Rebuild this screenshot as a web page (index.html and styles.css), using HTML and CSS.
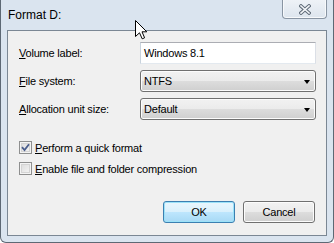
FILE: index.html
```html
<!DOCTYPE html>
<html>
<head>
<meta charset="utf-8">
<link rel="stylesheet" href="styles.css">
</head>
<body>
<div class="window">
  <div class="titlebar">
    <span class="title">Format D:</span>
    <div class="close">
      <svg width="12" height="11" viewBox="0 0 12 11">
        <path d="M2 2 L10 9 M10 2 L2 9" stroke="#5f6b78" stroke-width="3.6" stroke-linecap="square" fill="none"/>
        <path d="M2 2 L10 9 M10 2 L2 9" stroke="#f4f6f9" stroke-width="1.6" stroke-linecap="square" fill="none"/>
      </svg>
    </div>
  </div>
  <div class="client">
    <div class="fields">
      <span class="lbl"><u>V</u>olume label:</span>
      <div class="textbox">Windows 8.1</div>
      <span class="lbl"><u>F</u>ile system:</span>
      <div class="combo"><span>NTFS</span><i class="arrow"></i></div>
      <span class="lbl"><u>A</u>llocation unit size:</span>
      <div class="combo"><span>Default</span><i class="arrow"></i></div>
    </div>
    <div class="checks">
      <div class="check">
        <span class="box">
          <svg width="9" height="9" viewBox="0 0 9 9"><path d="M1 4.2 L3.5 7 L8 1.2" stroke="#4a5d8c" stroke-width="1.8" fill="none"/></svg>
        </span>
        <span class="ctext"><u>P</u>erform a quick format</span>
      </div>
      <div class="check">
        <span class="box"></span>
        <span class="ctext"><u>E</u>nable file and folder compression</span>
      </div>
    </div>
    <div class="buttons">
      <div class="btn default">OK</div>
      <div class="btn">Cancel</div>
    </div>
  </div>
</div>
<svg class="cursor" width="13" height="20" viewBox="0 0 13 20">
  <path d="M0.5 0.5 L0.5 16.5 L4.5 12.8 L7.2 18.8 L9.6 17.8 L7 11.8 L11.8 11.8 Z" fill="#fff" stroke="#000" stroke-width="1" stroke-linejoin="miter"/>
</svg>
</body>
</html>
```
FILE: styles.css
```css
html, body {
  margin: 0;
  padding: 0;
  background: #ffffff;
}
body {
  width: 334px;
  height: 243px;
  position: relative;
  overflow: hidden;
  font-family: "Liberation Sans", Arial, sans-serif;
  font-size: 11px;
  color: #000;
}
.window {
  box-sizing: border-box;
  width: 334px;
  height: 243px;
  background: #dae4ef;
  border: 1px solid #5d6874;
  border-top: none;
  border-radius: 0 0 6px 6px;
  padding: 0 6px 6px 6px;
  display: flex;
  flex-direction: column;
}
.titlebar {
  height: 30px;
  display: flex;
  justify-content: space-between;
  align-items: flex-start;
  flex: none;
}
.title {
  font-size: 12px;
  margin-top: 8px;
  margin-left: 1px;
  color: #000;
}
.close {
  box-sizing: border-box;
  width: 45px;
  height: 19px;
  border: 1px solid #8995a3;
  border-top: none;
  border-radius: 0 0 4px 4px;
  background: linear-gradient(#eef2f7, #dde5ee);
  box-shadow: inset 0 -1px 0 #f7f9fb, inset 1px 0 0 #f7f9fb, inset -1px 0 0 #f7f9fb;
  display: flex;
  align-items: center;
  justify-content: center;
  padding-left: 1px;
}
.close svg { display: block; }
.client {
  flex: 1;
  border: 1px solid #7b8794;
  background: #f0f0f0;
  display: flex;
  flex-direction: column;
  padding: 11px 0 12px 11px;
}
.fields {
  display: grid;
  grid-template-columns: 121px 176px;
  grid-auto-rows: 22px;
  row-gap: 6px;
  align-items: center;
  letter-spacing: -0.2px;
}
.lbl {
  white-space: nowrap;
}
.textbox {
  box-sizing: border-box;
  height: 22px;
  background: #fff;
  border: 1px solid;
  border-color: #abadb3 #dbdfe6 #e3e9ef #c9d3dd;
  padding: 0 3px;
  line-height: 20px;
}
.combo {
  box-sizing: border-box;
  height: 22px;
  border: 1px solid #707070;
  border-radius: 3px;
  background: linear-gradient(#f2f2f2 0%, #ebebeb 50%, #dddddd 50%, #cfcfcf 100%);
  box-shadow: inset 0 0 0 1px #fcfcfc;
  display: flex;
  align-items: center;
  justify-content: space-between;
  padding: 0 5px 0 3px;
}
.arrow {
  width: 0;
  height: 0;
  border-left: 3.5px solid transparent;
  border-right: 3.5px solid transparent;
  border-top: 4px solid #000;
  margin-top: 1px;
}
.checks {
  margin-top: 21px;
  display: flex;
  flex-direction: column;
  gap: 8px;
  letter-spacing: -0.2px;
}
.check {
  height: 13px;
  display: flex;
  align-items: center;
  gap: 3px;
}
.box {
  box-sizing: border-box;
  width: 13px;
  height: 13px;
  border: 1px solid #8e8f8f;
  background: #f4f4f4;
  box-shadow: inset 0 0 0 1px #f4f4f4, inset 0 0 0 2px #d4d4d4;
  background: linear-gradient(135deg, #d9d9d9, #f7f7f7);
  display: flex;
  align-items: center;
  justify-content: center;
  flex: none;
}
.box svg { display: block; }
.buttons {
  margin-top: auto;
  display: flex;
  justify-content: flex-end;
  gap: 8px;
  padding-right: 11px;
}
.btn {
  box-sizing: border-box;
  width: 72px;
  height: 22px;
  border: 1px solid #707070;
  border-radius: 3px;
  background: linear-gradient(#f2f2f2 0%, #ebebeb 50%, #dddddd 50%, #cfcfcf 100%);
  box-shadow: inset 0 0 0 1px #fcfcfc;
  display: flex;
  align-items: center;
  justify-content: center;
  letter-spacing: -0.2px;
}
.btn.default {
  border-color: #3c7fb1;
  background: linear-gradient(#e5f4fc 0%, #c4e5f6 50%, #98d1ef 50%, #68b3db 100%);
  box-shadow: inset 0 0 0 1px #9ce2f8;
  background: linear-gradient(#eaf6fd 0%, #d9f0fc 50%, #bee6fd 50%, #a7d9f5 100%);
}
.cursor {
  position: absolute;
  left: 135px;
  top: 20px;
}
```
